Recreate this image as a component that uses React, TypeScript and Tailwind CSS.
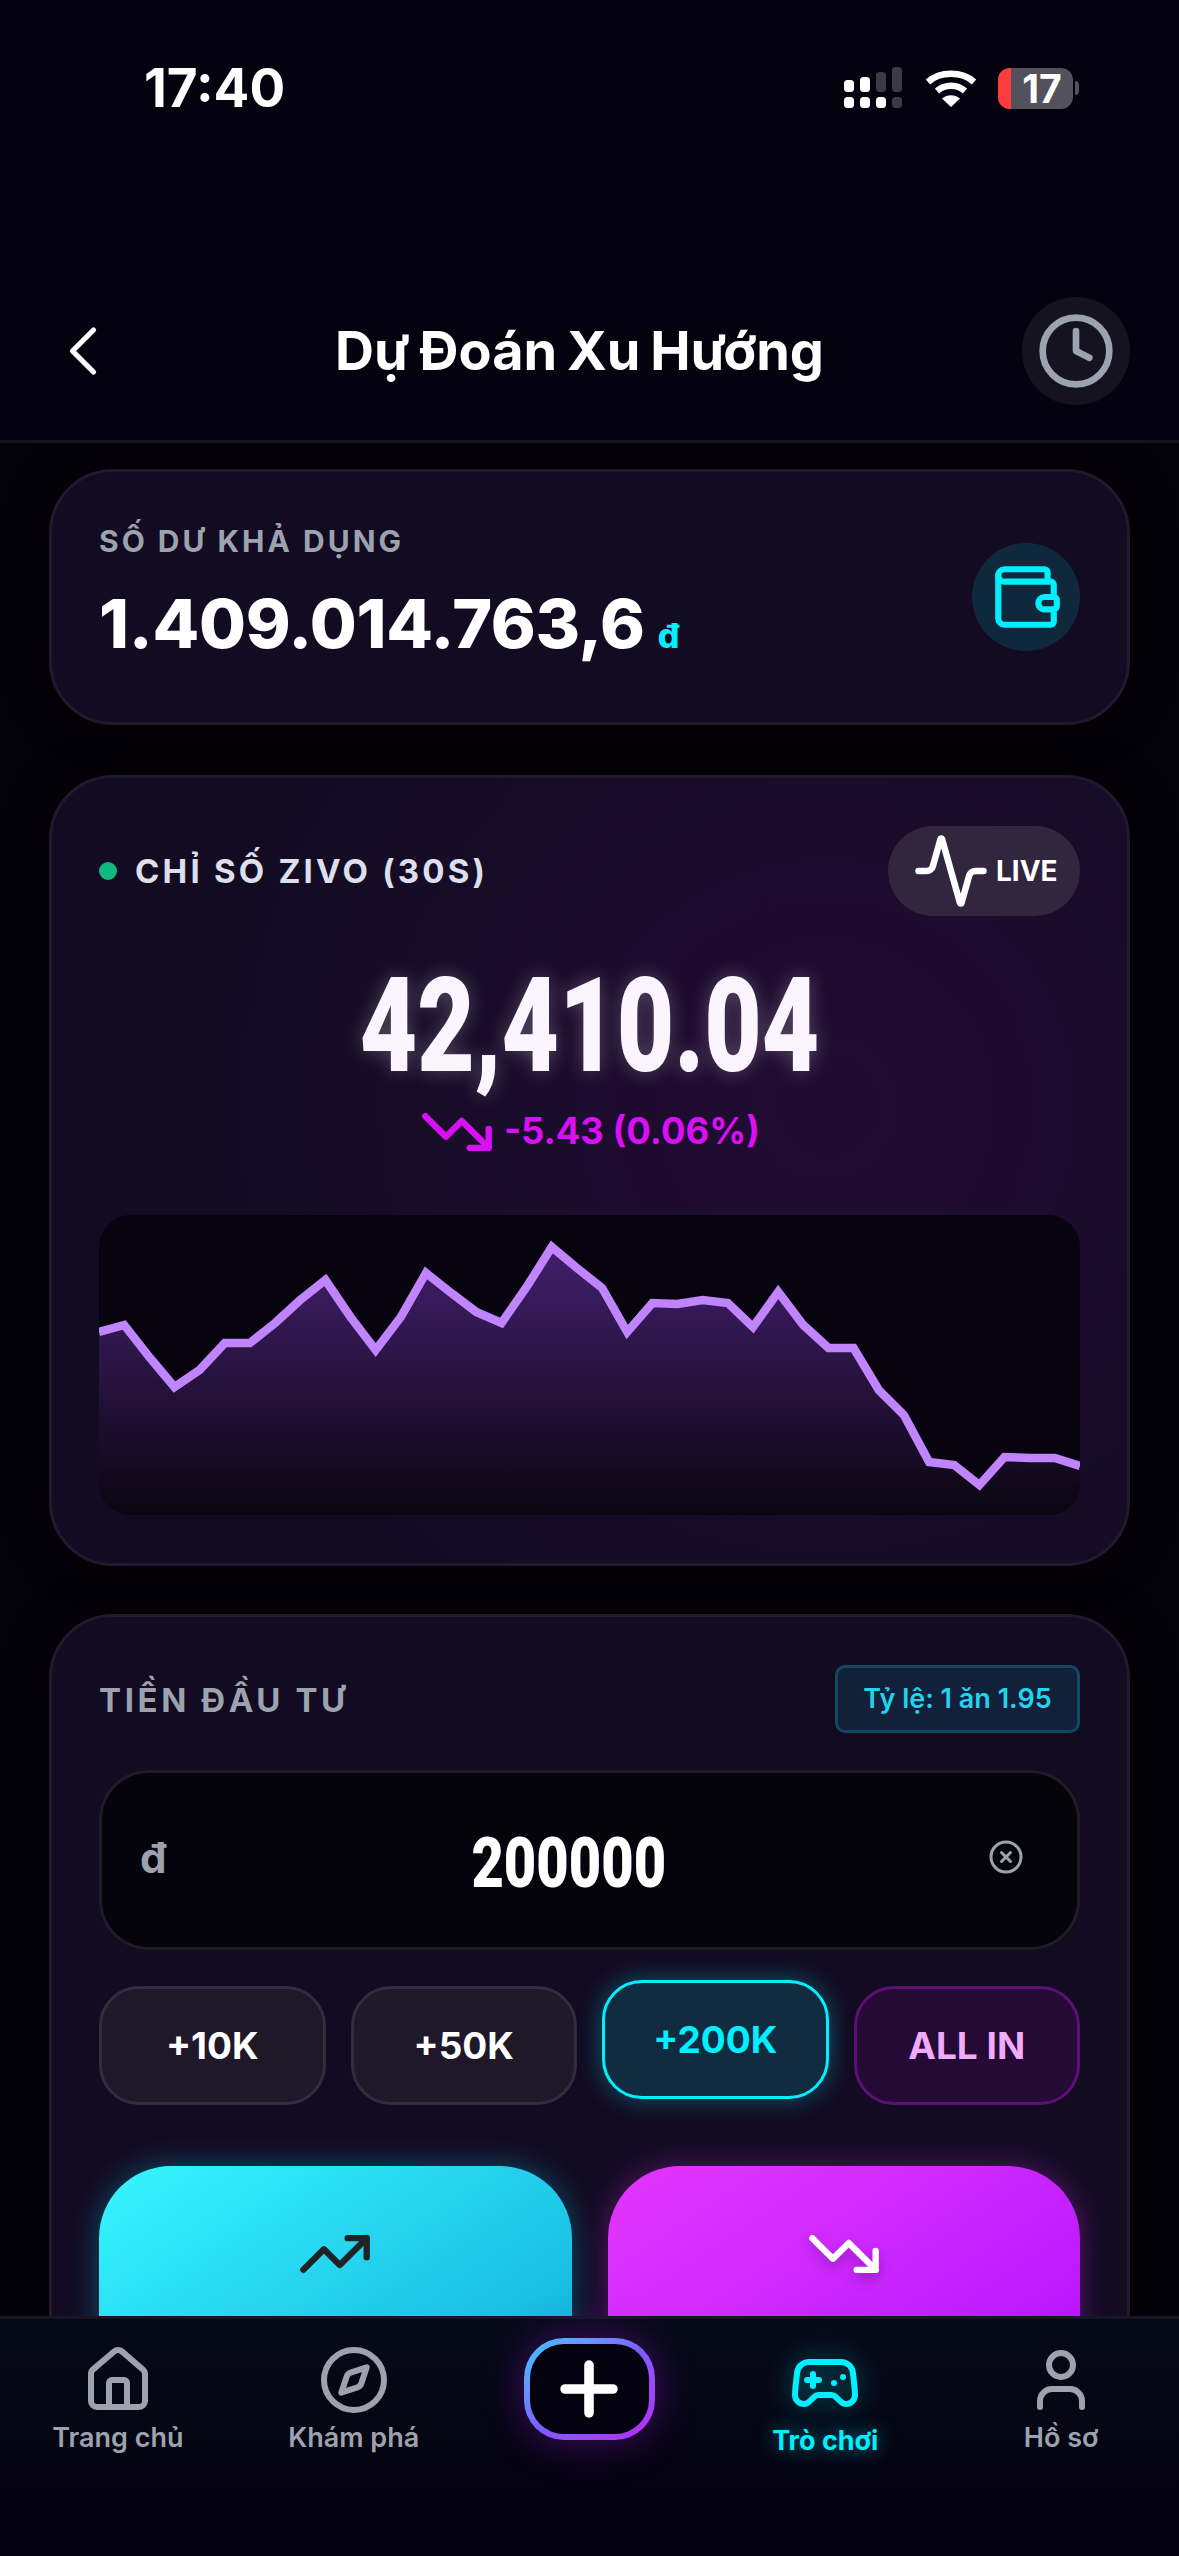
import { ChevronLeft, CircleX, Clock, Compass, Gamepad2, House, Plus, Activity, TrendingDown, TrendingUp, User, Wallet } from "lucide-react";

const chartY = [
  117, 110, 142, 172, 155, 128, 128, 108, 85, 65, 102, 135, 102, 58, 78, 97, 108, 72, 32, 53,
  73, 117, 88, 89, 85, 88, 112, 77, 110, 133, 133, 175, 200, 247, 250, 270, 242, 243, 243, 251,
];

const chartLine = chartY.map((y, i) => `${((i * 981) / (chartY.length - 1)).toFixed(1)},${y}`).join(" ");

const amounts = [
  { label: "+10K", cls: "bg-[#1e1829] border-[#322c3d] text-white" },
  { label: "+50K", cls: "bg-[#1e1829] border-[#322c3d] text-white" },
  {
    label: "+200K",
    cls: "bg-[#112b40] border-[#00f0ff] text-[#00f0ff] -translate-y-[6px] shadow-[0_0_24px_rgba(0,240,255,0.35)]",
  },
  { label: "ALL IN", cls: "bg-[#250a36] border-[#5e0f76] text-[#f0abfc]" },
];

function StatusBar() {
  return (
    <div className="h-[176px] flex items-center justify-between pl-[144px] pr-[100px]">
      <span className="text-[53px] leading-none font-bold text-white">17:40</span>
      <div className="flex items-center gap-[21px]">
        <svg width="60" height="42" viewBox="0 0 60 42">
          <rect x="0" y="30" width="10" height="11" rx="3.5" fill="#fff" />
          <rect x="16" y="30" width="10" height="11" rx="3.5" fill="#fff" />
          <rect x="32" y="30" width="10" height="11" rx="3.5" fill="#fff" />
          <rect x="48" y="30" width="10" height="11" rx="3.5" fill="#3c3a45" />
          <rect x="0" y="13" width="10" height="12" rx="3.5" fill="#fff" />
          <rect x="16" y="10" width="10" height="15" rx="3.5" fill="#fff" />
          <rect x="32" y="5" width="10" height="20" rx="3.5" fill="#3c3a45" />
          <rect x="48" y="0" width="10" height="25" rx="3.5" fill="#3c3a45" />
        </svg>
        <svg width="52" height="38" viewBox="0 0 52 38" fill="none">
          <path d="M3 13C15 2 37 2 49 13" stroke="#fff" strokeWidth="6.5" />
          <path d="M12 22C20 15 32 15 40 22" stroke="#fff" strokeWidth="6.5" />
          <path d="M17 29.5C22 25 30 25 35 29.5L26 38Z" fill="#fff" />
        </svg>
        <div className="flex items-center gap-[2px]">
          <div className="w-[75px] h-[41px] rounded-[12px] bg-[#53515c] flex items-center">
            <div className="w-[13px] h-full rounded-l-[12px] bg-[#ff3b3b]" />
            <span className="flex-1 text-center text-[39px] leading-[41px] font-bold text-white">17</span>
          </div>
          <div className="w-[4px] h-[14px] rounded-r-[4px] bg-[#53515c]" />
        </div>
      </div>
    </div>
  );
}

function Header() {
  return (
    <header className="mt-[121px] pb-[35px] pl-[41px] pr-[49px] flex items-center justify-between border-b-[3px] border-[#151220]">
      <ChevronLeft size={84} strokeWidth={1.5} className="text-white" />
      <h1 className="ml-[12px] text-[54px] leading-none font-bold text-white [word-spacing:-3px]">Dự Đoán Xu Hướng</h1>
      <button className="w-[108px] h-[108px] rounded-full bg-[#15131e] flex items-center justify-center">
        <Clock size={80} strokeWidth={2} className="text-[#9ca3af]" />
      </button>
    </header>
  );
}

function BalanceCard() {
  return (
    <section className="h-[256px] mb-[2px] shrink-0 rounded-[64px] border-[3px] border-[#201a2e] bg-[#120b22] shadow-[0_0_40px_rgba(0,0,0,0.6)] px-[47px] flex items-center justify-between">
      <div className="self-start pt-[51px]">
        <p className="text-[30px] leading-[36px] font-bold tracking-[3px] text-[#9ca3af]">SỐ DƯ KHẢ DỤNG</p>
        <p className="mt-[22px] flex items-baseline gap-[13px] leading-[84px] text-white">
          <span className="text-[68px] font-extrabold tracking-[-0.3px]">1.409.014.763,6</span>
          <span className="text-[34px] font-extrabold text-[#00f0ff]">đ</span>
        </p>
      </div>
      <div className="w-[108px] h-[108px] rounded-full bg-[#10283c] flex items-center justify-center">
        <Wallet size={74} strokeWidth={2} className="text-[#00f0ff]" />
      </div>
    </section>
  );
}

function IndexCard() {
  return (
    <section className="shrink-0 rounded-[64px] border-[3px] border-[#201a2e] bg-[radial-gradient(circle_at_72%_42%,#220b33_0%,#1a0c2b_35%,#120b22_70%)] shadow-[0_0_40px_rgba(0,0,0,0.6)] px-[47px] pt-[48px] pb-[48px]">
      <div className="flex items-center justify-between">
        <div className="flex items-center gap-[18px]">
          <span className="w-[18px] h-[18px] rounded-full bg-[#10b981]" />
          <span className="text-[33px] leading-none font-bold tracking-[3.2px] text-[#dde0ec]">CHỈ SỐ ZIVO (30S)</span>
        </div>
        <div className="w-[192px] h-[90px] rounded-full bg-[#32263f] flex items-center pl-[24px]">
          <Activity size={78} strokeWidth={2} className="text-white shrink-0" />
          <span className="ml-[6px] text-[28px] font-bold text-white">LIVE</span>
        </div>
      </div>
      <div className="mt-[45px] h-[130px] flex justify-center items-center">
        <span className="text-[132px] leading-[130px] font-black text-[#faf5ff] scale-x-[0.752] whitespace-nowrap [text-shadow:0_0_22px_rgba(255,255,255,0.25)] font-['Roboto',sans-serif]">
          42,410.04
        </span>
      </div>
      <div className="mt-[21px] h-[40px] flex items-center justify-center gap-[9px] text-[#d90ff5]">
        <TrendingDown size={76} strokeWidth={2} className="shrink-0" />
        <span className="-mt-[2px] text-[36.5px] font-bold leading-none">-5.43 (0.06%)</span>
      </div>
      <div className="mt-[63px] h-[300px] rounded-[32px] bg-[#07040f] overflow-hidden">
        <svg width="981" height="300" viewBox="0 0 981 300" className="block">
          <defs>
            <linearGradient id="chartFill" x1="0" y1="0" x2="0" y2="1">
              <stop offset="0%" stopColor="#421f6b" />
              <stop offset="50%" stopColor="#27123e" />
              <stop offset="100%" stopColor="#0a0510" />
            </linearGradient>
          </defs>
          <polygon points={`0,300 ${chartLine} 981,300`} fill="url(#chartFill)" />
          <polyline points={chartLine} fill="none" stroke="#c084fc" strokeWidth="8.5" strokeLinejoin="miter" strokeMiterlimit="10" />
        </svg>
      </div>
    </section>
  );
}

function InvestCard() {
  return (
    <section className="shrink-0 h-[900px] rounded-[64px] border-[3px] border-[#201a2e] bg-[#120b22] shadow-[0_0_40px_rgba(0,0,0,0.6)] px-[47px] pt-[48px]">
      <div className="flex items-center justify-between">
        <span className="text-[33px] mt-[2px] leading-none font-bold tracking-[3.6px] text-[#9ca3af]">TIỀN ĐẦU TƯ</span>
        <span className="w-[245px] h-[68px] rounded-[10px] border-[3px] border-[#0f4a60] bg-[#12203a] flex items-center justify-center text-[27px] font-semibold text-[#22d3ee]">
          Tỷ lệ: 1 ăn 1.95
        </span>
      </div>
      <div className="mt-[37px] h-[180px] rounded-[50px] border-[3px] border-[#1e1c24] bg-[#05030c] pl-[38px] pr-[53px] flex items-center">
        <span className="text-[42px] font-bold text-[#9ca3af] -mt-[6px]">đ</span>
        <span className="flex-1 pr-[20px] pt-[6px] text-center text-[70px] font-black leading-none text-white scale-x-[0.8] font-['Roboto',sans-serif]">
          200000
        </span>
        <CircleX size={36} strokeWidth={2} className="text-[#9ca3af] -mt-[6px]" />
      </div>
      <div className="mt-[36px] grid grid-cols-4 gap-[25px]">
        {amounts.map((a) => (
          <button
            key={a.label}
            className={`h-[119px] rounded-[40px] border-[3px] flex items-center justify-center text-[37px] font-bold ${a.cls}`}
          >
            {a.label}
          </button>
        ))}
      </div>
      <div className="mt-[61px] grid grid-cols-2 gap-[36px]">
        <button className="h-[320px] rounded-[72px] bg-gradient-to-br from-[#37f6ff] to-[#16b8e0] to-75% shadow-[0_0_30px_rgba(6,182,212,0.4)] flex justify-center pt-[50px]">
          <TrendingUp size={76} strokeWidth={2} className="text-[#1f2327]" />
        </button>
        <button className="h-[320px] rounded-[72px] bg-gradient-to-br from-[#e535ff] to-[#b814ff] to-75% shadow-[0_0_30px_rgba(192,38,211,0.4)] flex justify-center pt-[50px]">
          <TrendingDown size={76} strokeWidth={2} className="text-white drop-shadow-[0_6px_6px_rgba(0,0,0,0.25)]" />
        </button>
      </div>
    </section>
  );
}

function NavItem({ label, icon }: { label: string; icon: React.ReactNode }) {
  return (
    <div className="flex flex-col items-center pt-[25px] text-[#9ca3af]">
      {icon}
      <span className="mt-[4px] text-[27px] leading-[36px] font-semibold">{label}</span>
    </div>
  );
}

function BottomNav() {
  return (
    <nav className="relative z-10 h-[240px] shrink-0 border-t-[3px] border-[#171424] bg-gradient-to-b from-[#060a18] to-[#05020f] grid grid-cols-5">
      <NavItem label="Trang chủ" icon={<House size={72} strokeWidth={2} />} />
      <NavItem label="Khám phá" icon={<Compass size={72} strokeWidth={2} />} />
      <div className="flex justify-center pt-[19px]">
        <div className="w-[131px] h-[102px] rounded-[40px] p-[6px] bg-gradient-to-br from-[#1fc8ff] via-[#7b5cff] to-[#b81ff0] shadow-[0_0_40px_rgba(150,20,220,0.4)]">
          <div className="w-full h-full rounded-[34px] bg-[#05030f] flex items-center justify-center">
            <Plus size={82} strokeWidth={2.8} className="text-white" />
          </div>
        </div>
      </div>
      <div className="flex flex-col items-center pt-[28px] text-[#00f0ff]">
        <Gamepad2 size={72} strokeWidth={2} className="drop-shadow-[0_0_14px_rgba(0,240,255,0.45)]" />
        <span className="mt-[4px] text-[27px] leading-[36px] font-bold [text-shadow:0_0_20px_rgba(0,240,255,0.6)]">
          Trò chơi
        </span>
      </div>
      <NavItem label="Hồ sơ" icon={<User size={72} strokeWidth={2} />} />
    </nav>
  );
}

export default function App() {
  return (
    <div className="w-[1179px] h-[2556px] overflow-hidden flex flex-col bg-[#05020f] font-['Inter',sans-serif]">
      <StatusBar />
      <Header />
      <main className="flex-1 min-h-0 overflow-hidden px-[49px] pt-[26px] flex flex-col gap-[48px] bg-[#040209]">
        <BalanceCard />
        <IndexCard />
        <InvestCard />
      </main>
      <BottomNav />
    </div>
  );
}
